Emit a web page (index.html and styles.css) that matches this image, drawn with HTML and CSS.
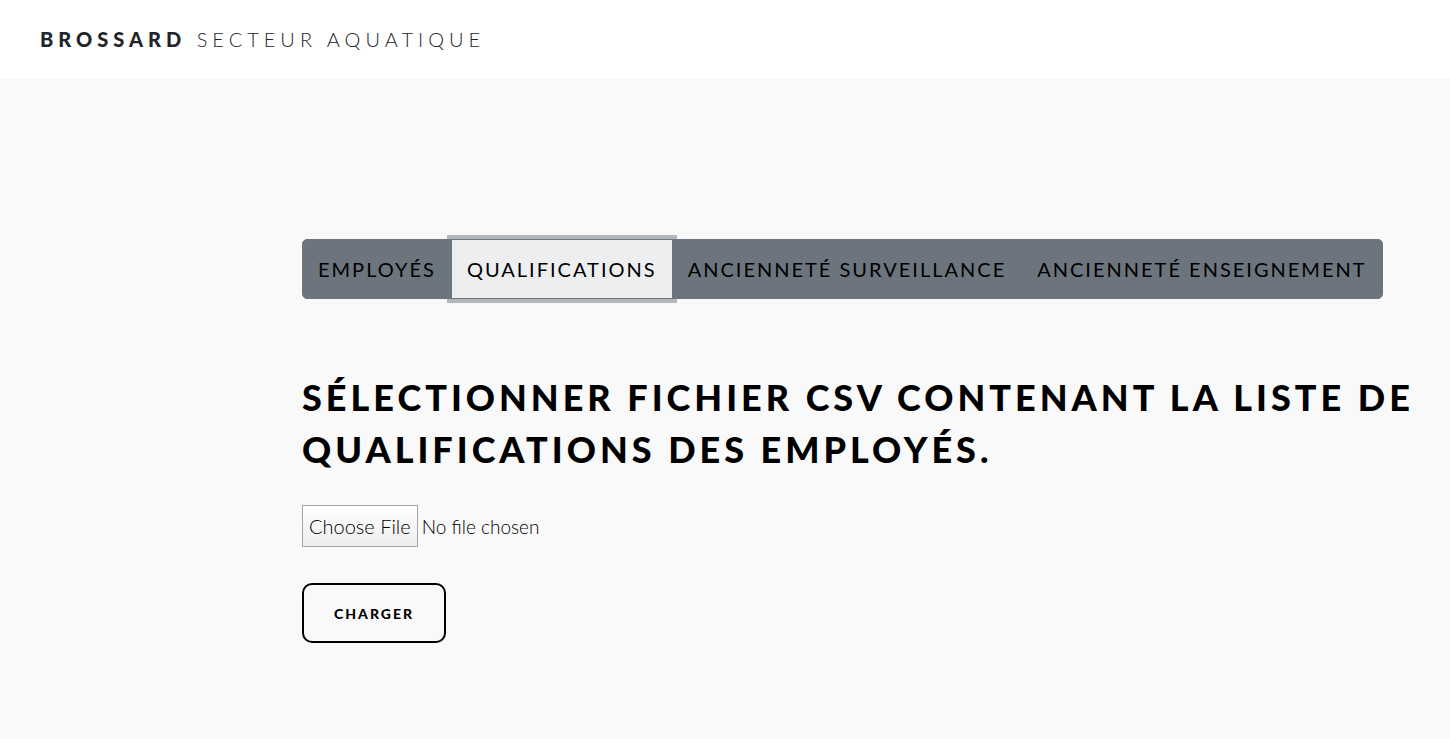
FILE: index.html
```html
<!DOCTYPE html>
<html lang="fr">
<head>
<meta charset="utf-8">
<title>Brossard Secteur Aquatique</title>
<link rel="stylesheet" href="styles.css">
</head>
<body>
<header class="header"><a class="logo" href="#"><strong>Brossard</strong> <span>Secteur Aquatique</span></a></header>
<main class="main">
  <div class="btn-group" role="group" aria-label="Listes">
    <button type="button" class="tab">Employés</button>
    <button type="button" class="tab tab-active">Qualifications</button>
    <button type="button" class="tab">Ancienneté surveillance</button>
    <button type="button" class="tab">Ancienneté enseignement</button>
  </div>
  <form class="upload">
    <h2 class="title"><label for="csv">Sélectionner fichier CSV contenant la liste de qualifications des employés.</label></h2>
    <input class="file" id="csv" type="file" accept=".csv">
    <button class="submit" type="submit">Charger</button>
  </form>
</main>
</body>
</html>
```

FILE: styles.css
```css
* { box-sizing: border-box; }
body {
  margin: 0;
  min-height: 100vh;
  background: #f9f9f9;
  color: #000;
  font-family: Lato, "Open Sans", sans-serif;
  font-size: 20px;
  font-weight: 300;
}
.header {
  background: #fff;
  padding: 0 40px;
  line-height: 79px;
}
.logo {
  color: #212529;
  text-decoration: none;
  text-transform: uppercase;
  letter-spacing: 5px;
  font-weight: 300;
}
.logo strong { font-weight: 900; }
.main { padding: 160px 16px 96px 302px; }
.btn-group { display: inline-flex; }
.tab {
  height: 60px;
  padding: 0 15px;
  border: 1px solid #6c757d;
  background: #6c757d;
  color: #000;
  font: 400 20px Lato, sans-serif;
  letter-spacing: 2px;
  text-transform: uppercase;
  white-space: nowrap;
}
.tab + .tab { margin-left: -1px; }
.tab:first-child { border-radius: 5px 0 0 5px; }
.tab:last-child { border-radius: 0 5px 5px 0; }
.tab-active {
  z-index: 1;
  background: #eceeef;
  box-shadow: 0 0 0 4px rgba(108, 117, 125, 0.5);
}
.upload {
  display: flex;
  flex-direction: column;
  align-items: flex-start;
}
.title {
  margin: 72px 0 30px;
  font-size: 36px;
  font-weight: 900;
  line-height: 52px;
  letter-spacing: 4px;
  text-transform: uppercase;
}
.file {
  font: 300 19px Lato, sans-serif;
  height: 42px;
}
.file::file-selector-button {
  height: 42px;
  margin: 0 4px 0 0;
  padding: 0 6px;
  border: 1px solid #a6a6a6;
  border-radius: 0;
  background: linear-gradient(#ffffff, #eeeeee);
  color: #000;
  font: 300 20px Lato, sans-serif;
}
.submit {
  margin-top: 36px;
  height: 60px;
  padding: 0 30px;
  border: 2px solid #000;
  border-radius: 10px;
  background: transparent;
  color: #000;
  font: 900 14px Lato, sans-serif;
  letter-spacing: 2px;
  text-transform: uppercase;
}
```
